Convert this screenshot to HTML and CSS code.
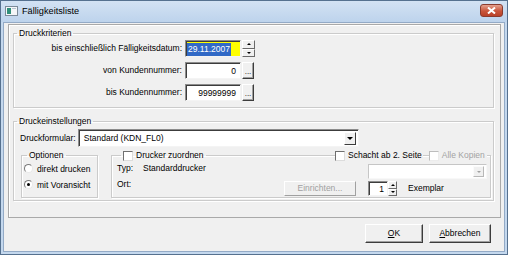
FILE: index.html
```html
<!DOCTYPE html>
<html lang="de">
<head>
    <meta charset="UTF-8">
    <title>Fälligkeitsliste</title>
    <link rel="stylesheet" href="styles.css">
</head>
<body>
    <div class="window">
        <div class="titlebar">
            <svg class="app-icon" width="13" height="10" viewBox="0 0 13 10">
                <rect x="0.5" y="0.5" width="12" height="9" fill="#f4f6f8" stroke="#7b8a99"/>
                <rect x="2" y="2" width="4" height="6" fill="#2f8f7a"/>
                <rect x="7" y="2" width="4" height="1" fill="#b8c4d0"/>
            </svg>
            <span class="title">Fälligkeitsliste</span>
            <div class="close">
                <svg width="9" height="7" viewBox="0 0 9 7">
                    <path d="M1 0.5 L8 6.5 M8 0.5 L1 6.5" stroke="#fff" stroke-width="2"/>
                </svg>
            </div>
        </div>

        <div class="client">
            <div class="panel">
                <!-- Druckkriterien -->
                <fieldset class="group criteria">
                    <legend>Druckkriterien</legend>
                    <div class="row">
                        <span class="lbl">bis einschließlich Fälligkeitsdatum:</span>
                        <div class="edit date"><span class="sel">29.11.2007</span></div>
                        <div class="spin">
                            <span class="spin-btn"><i class="arr-up"></i></span>
                            <span class="spin-btn"><i class="arr-down"></i></span>
                        </div>
                    </div>
                    <div class="row">
                        <span class="lbl">von Kundennummer:</span>
                        <div class="edit num">0</div>
                        <div class="btn dots">...</div>
                    </div>
                    <div class="row">
                        <span class="lbl">bis Kundennummer:</span>
                        <div class="edit num">99999999</div>
                        <div class="btn dots">...</div>
                    </div>
                </fieldset>

                <!-- Druckeinstellungen -->
                <fieldset class="group settings">
                    <legend>Druckeinstellungen</legend>
                    <div class="form-row">
                        <span>Druckformular:</span>
                        <div class="combo">
                            <span class="combo-text">Standard (KDN_FL0)</span>
                            <span class="drop"><i class="arr-down big"></i></span>
                        </div>
                    </div>
                    <div class="lower">
                        <fieldset class="sub options">
                            <legend>Optionen</legend>
                            <div class="radio-row"><span class="radio"></span>direkt drucken</div>
                            <div class="radio-row"><span class="radio checked"></span>mit Voransicht</div>
                        </fieldset>
                        <fieldset class="sub printer">
                            <legend><span class="check"></span>Drucker zuordnen</legend>
                            <div class="on-border">
                                <span class="tag"><span class="check"></span>Schacht ab 2. Seite</span>
                                <span class="tag off"><span class="check"></span>Alle Kopien</span>
                            </div>
                            <div class="p-row">
                                <span class="key">Typ:</span>
                                <span>Standarddrucker</span>
                                <div class="combo off small">
                                    <span class="combo-text"></span>
                                    <span class="drop"><i class="arr-down"></i></span>
                                </div>
                            </div>
                            <div class="p-row second">
                                <span class="key">Ort:</span>
                                <div class="btn off setup">Einrichten...</div>
                                <div class="edit copies">1</div>
                                <div class="spin tiny">
                                    <span class="spin-btn"><i class="arr-up"></i></span>
                                    <span class="spin-btn"><i class="arr-down"></i></span>
                                </div>
                                <span class="copies-lbl">Exemplar</span>
                            </div>
                        </fieldset>
                    </div>
                </fieldset>
            </div>

            <div class="buttons">
                <div class="btn push"><u>O</u>K</div>
                <div class="btn push wide"><u>A</u>bbrechen</div>
            </div>
        </div>
    </div>
</body>
</html>
```

FILE: styles.css
```css
* {
    margin: 0;
    padding: 0;
    box-sizing: border-box;
}

body {
    font-family: "Liberation Sans", Arial, sans-serif;
    font-size: 8.5px;
    color: #000;
    background: #fff;
}

/* Fensterrahmen */
.window {
    width: 508px;
    height: 255px;
    border: 1px solid #56718f;
    padding: 0 2px 2px;
    background: #c4d8ee;
    display: flex;
    flex-direction: column;
}

.titlebar {
    height: 21px;
    display: flex;
    align-items: center;
    background: linear-gradient(#d3e2f3, #bdd3ec);
    margin: 0 -2px;
    padding: 0 3px;
}

.app-icon {
    margin-left: 1px;
    margin-top: -2px;
}

.title {
    font-size: 9.2px;
    margin-left: 4px;
    margin-top: -1px;
}

.close {
    margin-left: auto;
    margin-right: 1px;
    margin-top: -3px;
    width: 23px;
    height: 13px;
    border: 1px solid #8a3b2e;
    border-radius: 3px;
    background: linear-gradient(#e4a18f, #c9553b 55%, #b94128);
    display: flex;
    align-items: center;
    justify-content: center;
}

.client {
    flex: 1;
    background: #f0f0f0;
    border: 1px solid #93aac6;
    padding: 1px 3px 0 4px;
    display: flex;
    flex-direction: column;
}

.panel {
    height: 194px;
    border: 1px solid #a9a9a9;
    box-shadow: inset 1px 1px 0 #fff;
    padding: 0 6px 0 4px;
}

/* Gruppenrahmen */
.group,
.sub {
    border: 1px solid #cbcbcb;
    box-shadow: 1px 1px 0 #fff, inset 1px 1px 0 #fff;
    min-width: 0;
}

legend {
    line-height: 13px;
    margin-left: 3px;
    padding: 0 2px;
}

.criteria {
    margin-top: 2px;
    padding: 0 0 6px 0;
    display: flex;
    flex-direction: column;
    gap: 5px;
}

.row {
    display: flex;
    height: 17px;
    align-items: stretch;
}

.lbl {
    width: 168px;
    margin-right: 3px;
    text-align: right;
    line-height: 17px;
}

.edit {
    width: 56px;
    background: #fff;
    border: 1px solid;
    border-color: #8c8c8c #f4f4f4 #f4f4f4 #8c8c8c;
    box-shadow: inset 1px 1px 0 #3c3c3c;
    line-height: 14px;
    padding: 1px 2px 0;
}

.edit.num {
    text-align: right;
    padding-right: 4px;
}

.edit.date {
    background: #ffff00;
}

.sel {
    background: #3169c6;
    color: #fff;
    display: inline-block;
    padding: 0 1px;
    line-height: 13px;
    margin-left: -1px;
}

.btn {
    background: #f0f0f0;
    border: 1px solid;
    border-color: #fff #3c3c3c #3c3c3c #fff;
    box-shadow: inset -1px -1px 0 #a0a0a0;
    text-align: center;
}

.dots {
    width: 12px;
    line-height: 17px;
    font-size: 8px;
    margin-left: 1px;
}

.spin {
    width: 13px;
    margin-left: 1px;
    display: flex;
    flex-direction: column;
}

.spin-btn {
    flex: 1;
    background: #f0f0f0;
    border: 1px solid;
    border-color: #fff #6a6a6a #6a6a6a #fff;
    display: flex;
    align-items: center;
    justify-content: center;
}

.arr-up,
.arr-down {
    width: 0;
    height: 0;
    border-left: 2px solid transparent;
    border-right: 2px solid transparent;
}

.arr-up {
    border-bottom: 2px solid #000;
}

.arr-down {
    border-top: 2px solid #000;
}

.arr-down.big {
    border-left-width: 3px;
    border-right-width: 3px;
    border-top-width: 3px;
}

/* Druckeinstellungen */
.settings {
    margin-top: 7px;
    padding: 1px 0 2px 0;
}

.form-row {
    display: flex;
    align-items: center;
    padding-left: 6px;
    height: 18px;
    gap: 2px;
}

.combo {
    width: 281px;
    height: 18px;
    background: #fff;
    border: 1px solid;
    border-color: #8c8c8c #f4f4f4 #f4f4f4 #8c8c8c;
    box-shadow: inset 1px 1px 0 #3c3c3c;
    display: flex;
    align-items: stretch;
    padding: 2px 2px 1px 5px;
}

.combo-text {
    flex: 1;
    line-height: 13px;
}

.drop {
    width: 12px;
    background: #f0f0f0;
    border: 1px solid;
    border-color: #fff #3c3c3c #3c3c3c #fff;
    display: flex;
    align-items: center;
    justify-content: center;
}

.combo.small {
    width: 119px;
    height: 15px;
    margin-left: auto;
    margin-top: 2px;
    padding: 1px 2px 1px 2px;
    border-color: #c6c6c6 #f8f8f8 #f8f8f8 #c6c6c6;
    box-shadow: none;
}

.combo.off .drop {
    border-color: #fbfbfb #b8b8b8 #b8b8b8 #fbfbfb;
    width: 11px;
}

.combo.off .arr-down {
    border-top-color: #a0a0a0;
}

.lower {
    display: flex;
    margin-top: 2px;
    padding-left: 7px;
}

.sub {
    padding: 0 0 1px 0;
}

.options {
    width: 77px;
    padding: 0 0 0 2px;
    display: flex;
    flex-direction: column;
    gap: 3px;
}

.radio-row {
    display: flex;
    align-items: center;
    height: 13px;
}

.radio {
    width: 9px;
    height: 9px;
    border-radius: 50%;
    border: 1px solid;
    border-color: #7a7a7a #e8e8e8 #e8e8e8 #7a7a7a;
    background: #fff;
    margin-right: 4px;
    display: flex;
    align-items: center;
    justify-content: center;
}

.radio.checked::after {
    content: "";
    width: 3px;
    height: 3px;
    border-radius: 50%;
    background: #000;
}

.printer {
    width: 380px;
    margin-left: 13px;
    position: relative;
    padding: 0 3px 1px 5px;
}

.printer legend {
    margin-left: 4px;
    display: flex;
    align-items: center;
}

.check {
    width: 10px;
    height: 10px;
    border: 1px solid;
    border-color: #6f6f6f #dcdcdc #dcdcdc #6f6f6f;
    background: #fff;
    margin-right: 3px;
    display: inline-block;
}

/* Kontrollkästchen, die auf der Rahmenlinie sitzen */
.on-border {
    position: absolute;
    top: -13px;
    left: 223px;
    display: flex;
    gap: 6px;
}

.tag {
    display: flex;
    align-items: center;
    background: #f0f0f0;
    line-height: 13px;
    padding-right: 1px;
}

.tag.off {
    color: #a3a3a3;
    padding-right: 2px;
}

.tag.off .check {
    border-color: #bdbdbd #ececec #ececec #bdbdbd;
}

.p-row {
    display: flex;
    align-items: flex-start;
    height: 16px;
}

.p-row.second {
    height: 18px;
}

.key {
    width: 26px;
    line-height: 13px;
}

.p-row span:not(.key):not(.copies-lbl) {
    line-height: 13px;
}

.setup {
    margin-left: 141px;
    margin-top: 3px;
    width: 72px;
    height: 15px;
    line-height: 13px;
    color: #a0a0a0;
    border-color: #fff #a0a0a0 #a0a0a0 #fff;
    box-shadow: none;
}

.edit.copies {
    width: 20px;
    height: 15px;
    margin-left: 12px;
    margin-top: 3px;
    text-align: right;
    line-height: 12px;
    padding-right: 3px;
}

.spin.tiny {
    width: 9px;
    height: 15px;
    margin-top: 3px;
    margin-left: 0;
}

.copies-lbl {
    margin-left: 11px;
    margin-top: 4px;
    line-height: 13px;
}

/* OK / Abbrechen */
.buttons {
    display: flex;
    justify-content: flex-end;
    gap: 6px;
    margin-top: 6px;
    padding-right: 10px;
}

.push {
    width: 58px;
    height: 19px;
    line-height: 17px;
}

.push.wide {
    width: 62px;
}
```
